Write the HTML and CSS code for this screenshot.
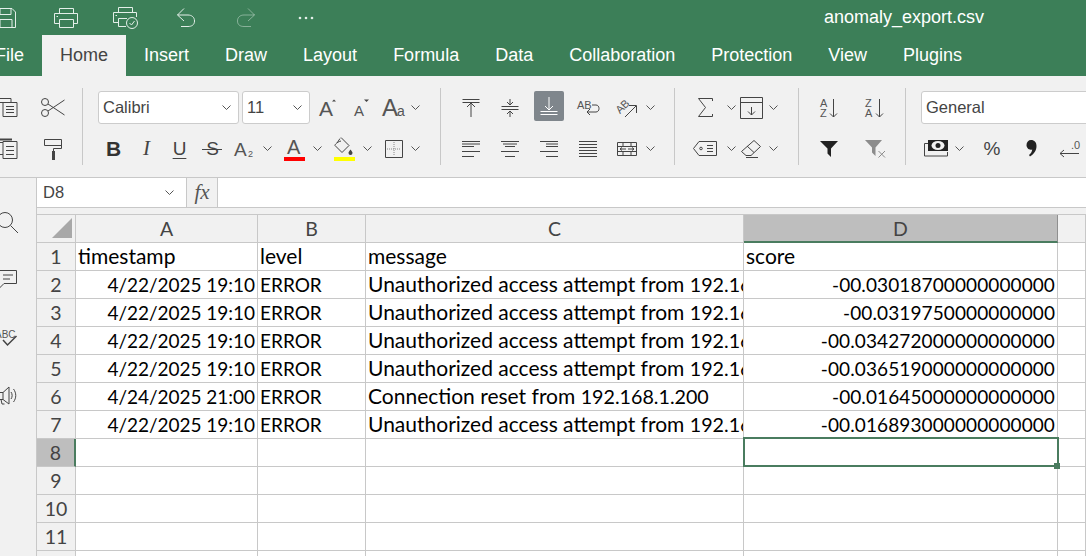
FILE: index.html
```html
<!DOCTYPE html>
<html lang="en">
<head>
  <meta charset="UTF-8">
  <title>anomaly_export.csv</title>
  <link rel="stylesheet" href="styles.css">
</head>
<body>
  <svg class="sprite" width="0" height="0">
    <symbol id="chev" viewBox="0 0 9 5"><path d="M.5 .5 4.5 4.5 8.5 .5"/></symbol>
  </svg>

  <header class="titlebar">
    <div class="qat">
      <span class="qat-btn"><svg width="24" height="20" viewBox="0 0 24 20"><path d="M2.5 .5H18L21.5 4V19.5H2.5Z"/><path d="M6 .5V6.5H17V.5M6 19.5V11.5H18V19.5"/></svg></span>
      <span class="qat-btn"><svg width="24" height="20" viewBox="0 0 24 20"><path d="M5.5 6V.5H19.5V6M5.5 15.5H.5V5.5H23.5V15.5H19.5M5.5 11.5H19.5V19.5H5.5Z"/><path d="M2.5 8.5H4"/></svg></span>
      <span class="qat-btn"><svg width="26" height="22" viewBox="0 0 26 22"><path d="M5.5 6V.5H19.5V6M5.5 15.5H.5V5.5H23.5V10M5.5 11.5H14M5.5 11.5V19.5H13"/><path d="M2.5 8.5H4"/><circle cx="19" cy="16" r="5.5"/><path d="M16.5 16 18.500 18 21.500 14"/></svg></span>
      <span class="qat-btn"><svg width="20" height="20" viewBox="0 0 20 20"><path d="M8 .5 1.500 7 8 13M1.500 7H12C15.500 7 18.500 9 18.500 13S15.500 18.500 12 18.500H5"/></svg></span>
      <span class="qat-btn dim"><svg width="20" height="20" viewBox="0 0 20 20"><path d="M12 .5 18.500 7 12 13M18.500 7H8C4.500 7 1.500 9 1.500 13S4.500 18.500 8 18.500H15"/></svg></span>
      <span class="qat-btn"><svg width="16" height="4" viewBox="0 0 16 4"><circle class="dot" cx="2" cy="2" r="1.300"/><circle class="dot" cx="8" cy="2" r="1.300"/><circle class="dot" cx="14" cy="2" r="1.300"/></svg></span>
    </div>
    <div class="doc-title">anomaly_export.csv</div>
  </header>

  <nav class="tabs">
    <span class="tab">File</span>
    <span class="tab active">Home</span>
    <span class="tab">Insert</span>
    <span class="tab">Draw</span>
    <span class="tab">Layout</span>
    <span class="tab">Formula</span>
    <span class="tab">Data</span>
    <span class="tab">Collaboration</span>
    <span class="tab">Protection</span>
    <span class="tab">View</span>
    <span class="tab">Plugins</span>
  </nav>

  <section class="toolbar">
    <div class="group g-clip">
      <div class="row clip-row">
        <span class="tb w48"><svg width="24" height="19" viewBox="0 0 24 19"><path d="M0 .5H18V4M0 4.500H21"/><path d="M10 4.500H24V18.500H10ZM13 8.500H21M13 11.500H21M13 14.500H21"/></svg></span>
        <span class="tb w48"><svg width="24" height="19" viewBox="0 0 24 19"><circle cx="4" cy="4" r="3.500"/><circle cx="4" cy="15" r="3.500"/><path d="M7 6 23.500 17M7 13 23.500 2"/></svg></span>
      </div>
      <div class="row clip-row">
        <span class="tb w48"><svg width="24" height="21" viewBox="0 0 24 21"><path class="thick" d="M2 1.500H19"/><path d="M0 4.500H10M0 16.500H10"/><path d="M10 3.500H24V20.500H10ZM13 8.500H21M13 12.500H21M13 16.500H21"/></svg></span>
        <span class="tb w48"><svg width="18" height="22" viewBox="0 0 18 22"><path d="M.5 1.500H17.500V7.500H.5ZM17.500 4.500V10.500H9.500V13"/><rect class="solid" x="8" y="13" width="3" height="9"/></svg></span>
      </div>
    </div>

    <div class="group g-font">
      <div class="row">
        <span class="select s-font">Calibri<svg class="chev"><use href="#chev"/></svg></span>
        <span class="select s-size">11<svg class="chev"><use href="#chev"/></svg></span>
        <span class="tb w34"><svg width="18" height="18" viewBox="0 0 18 18"><text class="gl" x="0" y="17" font-size="21">A</text><path class="solid" d="M13 2.500 15 .5 17 2.500Z"/></svg></span>
        <span class="tb w34"><svg width="16" height="18" viewBox="0 0 16 18"><text class="gl" x="0" y="17" font-size="15">A</text><path class="solid" d="M10 .5H15L12.500 3Z"/></svg></span>
        <span class="tb w30"><svg width="24" height="19" viewBox="0 0 24 19"><text class="gl" x="0" y="18" font-size="24">A</text><text class="gl" x="15" y="18" font-size="14">a</text></svg></span>
        <svg class="chev after"><use href="#chev"/></svg>
      </div>
      <div class="row r-fmt">
        <span class="tb w33 t-bold">B</span>
        <span class="tb w33 t-ital">I</span>
        <span class="tb w33 t-under">U</span>
        <span class="tb w33 t-strike">S</span>
        <span class="combo">
          <span class="tb w30"><svg width="20" height="18" viewBox="0 0 20 18"><text class="gl" x="0" y="16" font-size="19">A</text><text class="gl" x="14" y="17" font-size="9">2</text></svg></span>
          <svg class="chev after"><use href="#chev"/></svg>
        </span>
        <span class="combo">
          <span class="tb w30"><svg width="21" height="24" viewBox="0 0 21 24"><text class="gl" x="3" y="17" font-size="20">A</text><rect class="red" y="20" width="21" height="4"/></svg></span>
          <svg class="chev after"><use href="#chev"/></svg>
        </span>
        <span class="combo">
          <span class="tb w30"><svg width="21" height="24" viewBox="0 0 21 24"><path d="M7 .5 15 8.500 8 15.500 1 8.500C.5 8 3 5 7 4M6 1.500 3 6"/><path class="solid" d="M16.500 12.500C18 14.500 18.500 15 18.500 16A2 2 0 0 1 14.500 16C14.500 15 15 14.500 16.500 12.500Z"/><rect class="yellow" y="20" width="21" height="4"/></svg></span>
          <svg class="chev after"><use href="#chev"/></svg>
        </span>
        <span class="combo c-tight">
          <span class="tb w30"><svg width="18" height="18" viewBox="0 0 18 18"><path d="M.5 .5H17.500V17.500H.5Z"/><path class="dotted" d="M9 2V16M2 9H16"/></svg></span>
          <svg class="chev after"><use href="#chev"/></svg>
        </span>
      </div>
    </div>

    <div class="group g-align">
      <div class="row">
        <span class="tb w39"><svg width="18" height="18" viewBox="0 0 18 18"><path d="M.5 .5H17.500M.5 3.500H17.500M9 4V18M5 8 9 4 13 8"/></svg></span>
        <span class="tb w39"><svg width="18" height="18" viewBox="0 0 18 18"><path d="M.5 7.500H17.500M.5 10.500H17.500M9 0V6M9 12V18M6 3 9 6 12 3M6 15 9 12 12 15"/></svg></span>
        <span class="tb w39"><span class="active-btn"><svg class="on" width="18" height="18" viewBox="0 0 18 18"><path d="M.5 14.500H17.500M.5 17.500H17.500M9 0V13M5 9 9 13 13 9"/></svg></span></span>
        <span class="tb w39"><svg width="22" height="18" viewBox="0 0 22 18"><text class="gl" x="0" y="10" font-size="11">AB</text><path d="M15 6H19C23 6 23 13 19 13H10M13 10 10 13 13 16"/></svg></span>
        <span class="tb w39"><svg width="22" height="20" viewBox="0 0 22 20"><text class="gl" x="0" y="13" font-size="11" transform="rotate(-45 6 10)">AB</text><path d="M9 19 20 8M13 7.500H20.500V15"/></svg></span>
        <svg class="chev"><use href="#chev"/></svg>
      </div>
      <div class="row">
        <span class="tb w39"><svg width="18" height="16" viewBox="0 0 18 16"><path d="M0 .5H18M0 5.500H12M0 10.500H18M0 15.500H12M0 3H18" class="lines"/></svg></span>
        <span class="tb w39"><svg width="18" height="16" viewBox="0 0 18 16"><path d="M0 .5H18M4 5.500H14M0 10.500H18M4 15.500H14M2 3H16" class="lines"/></svg></span>
        <span class="tb w39"><svg width="18" height="16" viewBox="0 0 18 16"><path d="M0 .5H18M6 5.500H18M0 10.500H18M6 15.500H18M6 3H18" class="lines"/></svg></span>
        <span class="tb w39"><svg width="18" height="16" viewBox="0 0 18 16"><path d="M0 .5H18M0 3.500H18M0 6.500H18M0 9.500H18M0 12.500H18M0 15.500H18" class="lines"/></svg></span>
        <span class="tb w39"><svg width="20" height="14" viewBox="0 0 20 14"><path d="M.5 .5H19.500V13.500H.5ZM.5 4.500H19.500M.5 9.500H19.500M6 .5V4M14 .5V4M6 10V13M14 10V13"/><path d="M3 7H9M3 7 5 5.500M3 7 5 8.500M11 7H17M17 7 15 5.500M17 7 15 8.500"/></svg></span>
        <svg class="chev"><use href="#chev"/></svg>
      </div>
    </div>

    <div class="group g-edit">
      <div class="row">
        <span class="tb w38"><svg width="15" height="19" viewBox="0 0 15 19"><path d="M14.500 3V.5H.5L7.500 9.500.5 18.500H14.500V16"/></svg></span>
        <svg class="chev"><use href="#chev"/></svg>
        <span class="tb w30"><svg width="23" height="22" viewBox="0 0 23 22"><path d="M.5 .5H22.500V21.500H.5ZM.5 5.500H22.500M11.500 10V18M8 14.500 11.500 18 15 14.500"/></svg></span>
        <svg class="chev"><use href="#chev"/></svg>
      </div>
      <div class="row">
        <span class="tb w38"><svg width="24" height="15" viewBox="0 0 24 15"><path d="M6 .5H23.500V14.500H6L.5 7.500ZM14 4.500H20M14 7.500H20M14 10.500H20"/><circle cx="8" cy="7.500" r="1.300"/></svg></span>
        <svg class="chev"><use href="#chev"/></svg>
        <span class="tb w30"><svg width="20" height="18" viewBox="0 0 20 18"><path d="M13 .5 19.500 6.500 10 15.500H5L.5 11.500ZM6 6 13 12.500M5 17.500H17"/></svg></span>
        <svg class="chev"><use href="#chev"/></svg>
      </div>
    </div>

    <div class="group g-sort">
      <div class="row">
        <span class="tb w46"><svg width="18" height="20" viewBox="0 0 18 20"><text class="gl" x="0" y="9" font-size="11">A</text><text class="gl" x="0" y="19" font-size="11">Z</text><path d="M13.500 1V19M10 15.500 13.500 19 17 15.500"/></svg></span>
        <span class="tb w46"><svg width="20" height="20" viewBox="0 0 20 20"><text class="gl" x="0" y="9" font-size="11">Z</text><text class="gl" x="0" y="19" font-size="11">A</text><path d="M14.500 1V19M11 15.500 14.500 19 18 15.500"/></svg></span>
      </div>
      <div class="row">
        <span class="tb w46"><svg width="18" height="16" viewBox="0 0 18 16"><path class="solid dark" d="M0 0H18L11 7.500V16L7.500 12.500V7.500Z"/></svg></span>
        <span class="tb w46"><svg width="21" height="18" viewBox="0 0 21 18"><path class="solid grey" d="M0 0H17L10.500 7.500V16L7 12.500V7.500Z"/><path class="grey-line" d="M13.500 11 20 17.500M20 11 13.500 17.500"/></svg></span>
      </div>
    </div>

    <div class="group g-number">
      <div class="row">
        <span class="select s-number">General</span>
      </div>
      <div class="row r-num">
        <span class="tb w25"><svg width="25" height="17" viewBox="0 0 25 17"><path class="solid dark" d="M4 0H24V11H4Z"/><ellipse class="cut" cx="14" cy="5.500" rx="6.500" ry="4.500"/><circle class="solid dark" cx="14" cy="5.500" r="2.500"/><path d="M4 3.500H.5V16H23.500V12"/></svg></span>
        <svg class="chev"><use href="#chev"/></svg>
        <span class="tb t-pct">%</span>
        <span class="tb w38"><svg width="11" height="17" viewBox="0 0 11 17"><path class="solid dark" d="M5 0C8.500 0 10.500 2.500 10.500 6C10.500 10.500 8 14 4 16.500L3 15C5 13.500 6 11.500 6.200 9.500C3 10.500 .5 8 .5 5C.5 2 2.500 0 5 0Z"/></svg></span>
        <span class="tb w20 t-left"><svg width="22" height="18" viewBox="0 0 22 18"><path d="M1 13.500H20M5 10 1 13.500 5 17"/><text class="gl" x="12" y="9" font-size="11">.0</text></svg></span>
      </div>
    </div>
  </section>

  <main class="workspace">
    <aside class="sidebar">
      <span class="side-btn"><svg width="22" height="22" viewBox="0 0 22 22"><circle cx="8" cy="8" r="7.500"/><path d="M13.500 13.500 21 21"/></svg></span>
      <span class="side-btn"><svg width="20" height="19" viewBox="0 0 20 19"><path d="M0 .5H19.500V13.500H7L2 18.500V13.500H0"/><path d="M6 5H16M6 9H13"/></svg></span>
      <span class="side-btn"><svg width="21" height="19" viewBox="0 0 21 19"><text class="gl" x="-2" y="10" font-size="10">ABC</text><path class="mid" d="M6 12 10.500 17 19.500 8"/></svg></span>
      <span class="side-btn"><svg width="20" height="20" viewBox="0 0 20 20"><path d="M0 6.500H6L12 1V18L6 13.500H0M6 6.500V13.500M4 13.500 5 18H7.500"/><path d="M14 6C15.500 8 15.500 11 14 13M16.500 3C19.500 7 19.500 12 16.500 16"/></svg></span>
    </aside>

    <div class="sheet">
      <div class="formula-bar">
        <div class="name-box">D8<svg class="chev"><use href="#chev"/></svg></div>
        <div class="fx-box">fx</div>
      </div>
      <div class="strip"></div>

      <div class="grid">
        <div class="head corner"><span class="corner-mark"></span></div>
        <div class="head">A</div>
        <div class="head">B</div>
        <div class="head">C</div>
        <div class="head picked-col">D</div>
        <div class="head"></div>

        <div class="head">1</div>
        <div class="cell">timestamp</div>
        <div class="cell">level</div>
        <div class="cell">message</div>
        <div class="cell">score</div>
        <div class="cell"></div>

        <div class="head">2</div>
        <div class="cell num date">4/22/2025 19:10</div>
        <div class="cell caps">ERROR</div>
        <div class="cell">Unauthorized access attempt from <span class="dg">192.168.1.100</span></div>
        <div class="cell num">-00.03018700000000000</div>
        <div class="cell"></div>

        <div class="head">3</div>
        <div class="cell num date">4/22/2025 19:10</div>
        <div class="cell caps">ERROR</div>
        <div class="cell">Unauthorized access attempt from <span class="dg">192.168.1.100</span></div>
        <div class="cell num">-00.0319750000000000</div>
        <div class="cell"></div>

        <div class="head">4</div>
        <div class="cell num date">4/22/2025 19:10</div>
        <div class="cell caps">ERROR</div>
        <div class="cell">Unauthorized access attempt from <span class="dg">192.168.1.100</span></div>
        <div class="cell num">-00.034272000000000000</div>
        <div class="cell"></div>

        <div class="head">5</div>
        <div class="cell num date">4/22/2025 19:10</div>
        <div class="cell caps">ERROR</div>
        <div class="cell">Unauthorized access attempt from <span class="dg">192.168.1.100</span></div>
        <div class="cell num">-00.036519000000000000</div>
        <div class="cell"></div>

        <div class="head">6</div>
        <div class="cell num date">4/24/2025 21:00</div>
        <div class="cell caps">ERROR</div>
        <div class="cell">Connection reset from <span class="dg">192.168.1.200</span></div>
        <div class="cell num">-00.01645000000000000</div>
        <div class="cell"></div>

        <div class="head">7</div>
        <div class="cell num date">4/22/2025 19:10</div>
        <div class="cell caps">ERROR</div>
        <div class="cell">Unauthorized access attempt from <span class="dg">192.168.1.100</span></div>
        <div class="cell num">-00.016893000000000000</div>
        <div class="cell"></div>

        <div class="head picked-row">8</div>
        <div class="cell"></div>
        <div class="cell"></div>
        <div class="cell"></div>
        <div class="cell picked"><span class="sel-box"><span class="sel-handle"></span></span></div>
        <div class="cell"></div>

        <div class="head">9</div>
        <div class="cell"></div>
        <div class="cell"></div>
        <div class="cell"></div>
        <div class="cell"></div>
        <div class="cell"></div>

        <div class="head">10</div>
        <div class="cell"></div>
        <div class="cell"></div>
        <div class="cell"></div>
        <div class="cell"></div>
        <div class="cell"></div>

        <div class="head">11</div>
        <div class="cell"></div>
        <div class="cell"></div>
        <div class="cell"></div>
        <div class="cell"></div>
        <div class="cell"></div>

        <div class="head"></div>
        <div class="cell"></div>
        <div class="cell"></div>
        <div class="cell"></div>
        <div class="cell"></div>
        <div class="cell"></div>
      </div>
    </div>
  </main>
</body>
</html>
```

FILE: styles.css
```css
html, body {
  margin: 0;
  padding: 0;
  height: 556px;
  overflow: hidden;
}

body {
  font-family: "Liberation Sans", Arial, sans-serif;
  background: #fff;
  color: #444;
}

.sprite {
  position: absolute;
}

svg {
  display: block;
  flex: none;
  fill: none;
  stroke: #444;
  stroke-width: 1;
  overflow: visible;
}

/* title bar */
.titlebar {
  display: flex;
  align-items: center;
  height: 35px;
  background: #3c7f58;
  color: #fff;
  overflow: hidden;
}

.titlebar svg {
  stroke: #e4efe9;
}

.qat {
  display: flex;
  margin-left: -24px;
}

.qat-btn {
  display: flex;
  justify-content: center;
  align-items: center;
  width: 60px;
}

.qat-btn.dim svg {
  opacity: 0.45;
}

.dot {
  fill: #e4efe9;
  stroke: none;
}

.doc-title {
  margin-left: 488px;
  font-size: 18px;
}

/* tabs */
.tabs {
  display: flex;
  height: 41px;
  background: #3c7f58;
  color: #fff;
  font-size: 18px;
  overflow: hidden;
}

.tab {
  flex: none;
  padding: 0 18px;
  line-height: 41px;
}

.tab:first-child {
  margin-left: -23px;
}

.tab.active {
  background: #f1f1f1;
  color: #444;
}

/* toolbar */
.toolbar {
  display: flex;
  height: 89px;
  padding-top: 12px;
  background: #f1f1f1;
  border-bottom: 1px solid #c8c8c8;
  overflow: hidden;
}

.group {
  flex: none;
  display: flex;
  flex-direction: column;
  gap: 8px;
  height: 74px;
  padding-top: 3px;
  border-right: 1px solid #c8c8c8;
  margin-bottom: 12px;
}

.g-clip { width: 82px; }
.g-font { width: 357px; }
.g-align { width: 233px; }
.g-edit { width: 123px; }
.g-sort { width: 106px; }
.g-number { width: 180px; border-right: 0; }

.row {
  display: flex;
  align-items: center;
  height: 33px;
}

.clip-row { margin-left: -19px; }
.g-font .row:first-child { padding-left: 15px; }
.r-fmt { padding-left: 14px; }
.g-align .row { padding-left: 10px; }
.g-edit .row { padding-left: 11px; }
.g-edit .row > .chev { margin-left: 3px; }
.g-sort .row { padding-left: 7px; }
.g-number .row:first-child { padding-left: 15px; }
.r-num { padding-left: 18px; }
.r-num .chev { margin-left: 6px; }

.tb {
  flex: none;
  display: flex;
  justify-content: center;
  align-items: center;
}

.w20 { width: 20px; }
.w25 { width: 25px; }
.w30 { width: 30px; }
.w33 { width: 33px; }
.w34 { width: 34px; }
.w38 { width: 38px; }
.w39 { width: 39px; }
.w46 { width: 46px; }
.w48 { width: 48px; }

.chev {
  width: 9px;
  height: 5px;
  stroke: #555;
}

.chev.after {
  margin-left: 2px;
}

.r-fmt .chev.after {
  margin-left: 4px;
}

.combo {
  display: flex;
  align-items: center;
  width: 46px;
  margin-right: 4px;
}

.r-fmt .c-tight .chev.after {
  margin-left: 2px;
}

.select {
  flex: none;
  box-sizing: border-box;
  display: flex;
  justify-content: space-between;
  align-items: center;
  height: 33px;
  padding: 0 7px 0 4px;
  background: #fff;
  border: 1px solid #ccc;
  border-radius: 3px;
  font-size: 16.5px;
}

.s-font { width: 141px; margin-right: 3px; }
.s-size { width: 68px; margin-right: 1px; }
.s-number { width: 200px; }

.gl {
  font-family: "Liberation Sans", Arial, sans-serif;
  fill: #555;
  stroke: none;
}

.solid {
  fill: #444;
  stroke: none;
}

.solid.dark {
  fill: #222;
}

.solid.grey {
  fill: #8c8c8c;
}

.grey-line {
  stroke: #8c8c8c;
}

.cut {
  fill: #f1f1f1;
  stroke: none;
}

.thick {
  stroke-width: 2;
}

.mid {
  stroke-width: 1.5;
}

.dotted {
  stroke-dasharray: 1 1;
  stroke: #888;
}

.red {
  fill: #f00;
  stroke: none;
}

.yellow {
  fill: #ff0;
  stroke: none;
}

.t-bold {
  font-size: 21px;
  font-weight: bold;
  color: #333;
}

.t-ital {
  font-family: "Liberation Serif", serif;
  font-size: 21px;
  font-style: italic;
}

.t-under {
  font-size: 19px;
  text-decoration: underline;
  text-underline-offset: 3px;
  text-decoration-thickness: 1px;
}

.t-strike {
  position: relative;
  font-size: 19px;
}

/* the strike runs wider than the letter */
.t-strike::after {
  content: "";
  position: absolute;
  left: 6px;
  right: 7px;
  top: 50%;
  height: 1px;
  background: #444;
}

.t-pct {
  width: 36px;
  margin-left: 10px;
  font-size: 19px;
}

.r-num .w38 {
  margin-left: 2px;
}

.t-left {
  margin-left: 10px;
}

.active-btn {
  display: flex;
  justify-content: center;
  align-items: center;
  width: 30px;
  height: 30px;
  margin-top: -3px;
  background: #7f868c;
  border-radius: 2px;
}

.on {
  stroke: #fff;
}

/* sidebar + sheet */
.workspace {
  display: flex;
  height: 378px;
}

.sidebar {
  flex: none;
  width: 37px;
  padding-top: 34px;
  box-sizing: border-box;
  display: flex;
  flex-direction: column;
  gap: 37px;
  background: #f1f1f1;
  border-right: 1px solid #c8c8c8;
  overflow: hidden;
}

.side-btn {
  display: block;
  height: 21px;
  margin-left: -3px;
}

.sheet {
  flex: 1;
  min-width: 0;
}

.formula-bar {
  display: flex;
  height: 29px;
  border-bottom: 1px solid #c8c8c8;
  background: #fff;
}

.name-box {
  box-sizing: border-box;
  display: flex;
  justify-content: space-between;
  align-items: center;
  width: 150px;
  padding: 0 12px 0 6px;
  border-right: 1px solid #c8c8c8;
  font-size: 16.5px;
}

.fx-box {
  box-sizing: border-box;
  width: 31px;
  background: #f1f1f1;
  border-right: 1px solid #c8c8c8;
  font-family: "Liberation Serif", serif;
  font-style: italic;
  font-size: 21px;
  line-height: 28px;
  text-align: center;
  color: #555;
}

.strip {
  height: 6px;
  background: #f1f1f1;
  border-bottom: 1px solid #c8c8c8;
}

/* Lato stands in for Calibri: letters run small, digits and capitals run wide,
   so they get different sizes */
.grid {
  display: grid;
  grid-template-columns: 39px 182px 108px 378px 314px 1fr;
  grid-auto-rows: 28px;
  font-family: Lato, "Liberation Sans", sans-serif;
  font-size: 21px;
}

.head, .cell {
  box-sizing: border-box;
  line-height: 27px;
  border-right: 1px solid #c8c8c8;
  border-bottom: 1px solid #c8c8c8;
  white-space: nowrap;
  overflow: hidden;
}

.head {
  background: #f1f1f1;
  color: #444;
  text-align: center;
  font-size: 19.5px;
}

.cell {
  padding: 0 2px;
  color: #000;
  line-height: 25px;
}

.num {
  text-align: right;
  font-size: 19px;
  letter-spacing: 0.1px;
  line-height: 27px;
}

.date {
  letter-spacing: -0.03px;
}

.caps {
  font-size: 19px;
  line-height: 27px;
}

.dg {
  font-size: 19.7px;
}

.corner {
  position: relative;
}

.corner-mark {
  position: absolute;
  right: 3px;
  bottom: 4px;
  width: 20px;
  height: 20px;
  background: #a8a8a8;
  clip-path: polygon(100% 0, 100% 100%, 0 100%);
}

.picked-col {
  background: #bebebe;
  border-bottom: 2px solid #4a7c5f;
  border-right-color: #8f8f8f;
}

.picked-row {
  background: #bebebe;
  border-right: 2px solid #4a7c5f;
}

.picked {
  position: relative;
  overflow: visible;
}

.sel-box {
  box-sizing: border-box;
  position: absolute;
  left: -1px;
  top: -2px;
  width: 316px;
  height: 30px;
  border: 2px solid #4a7c5f;
  z-index: 2;
}

.sel-handle {
  position: absolute;
  right: -3px;
  bottom: -4px;
  width: 6px;
  height: 6px;
  background: #4a7c5f;
}
```
